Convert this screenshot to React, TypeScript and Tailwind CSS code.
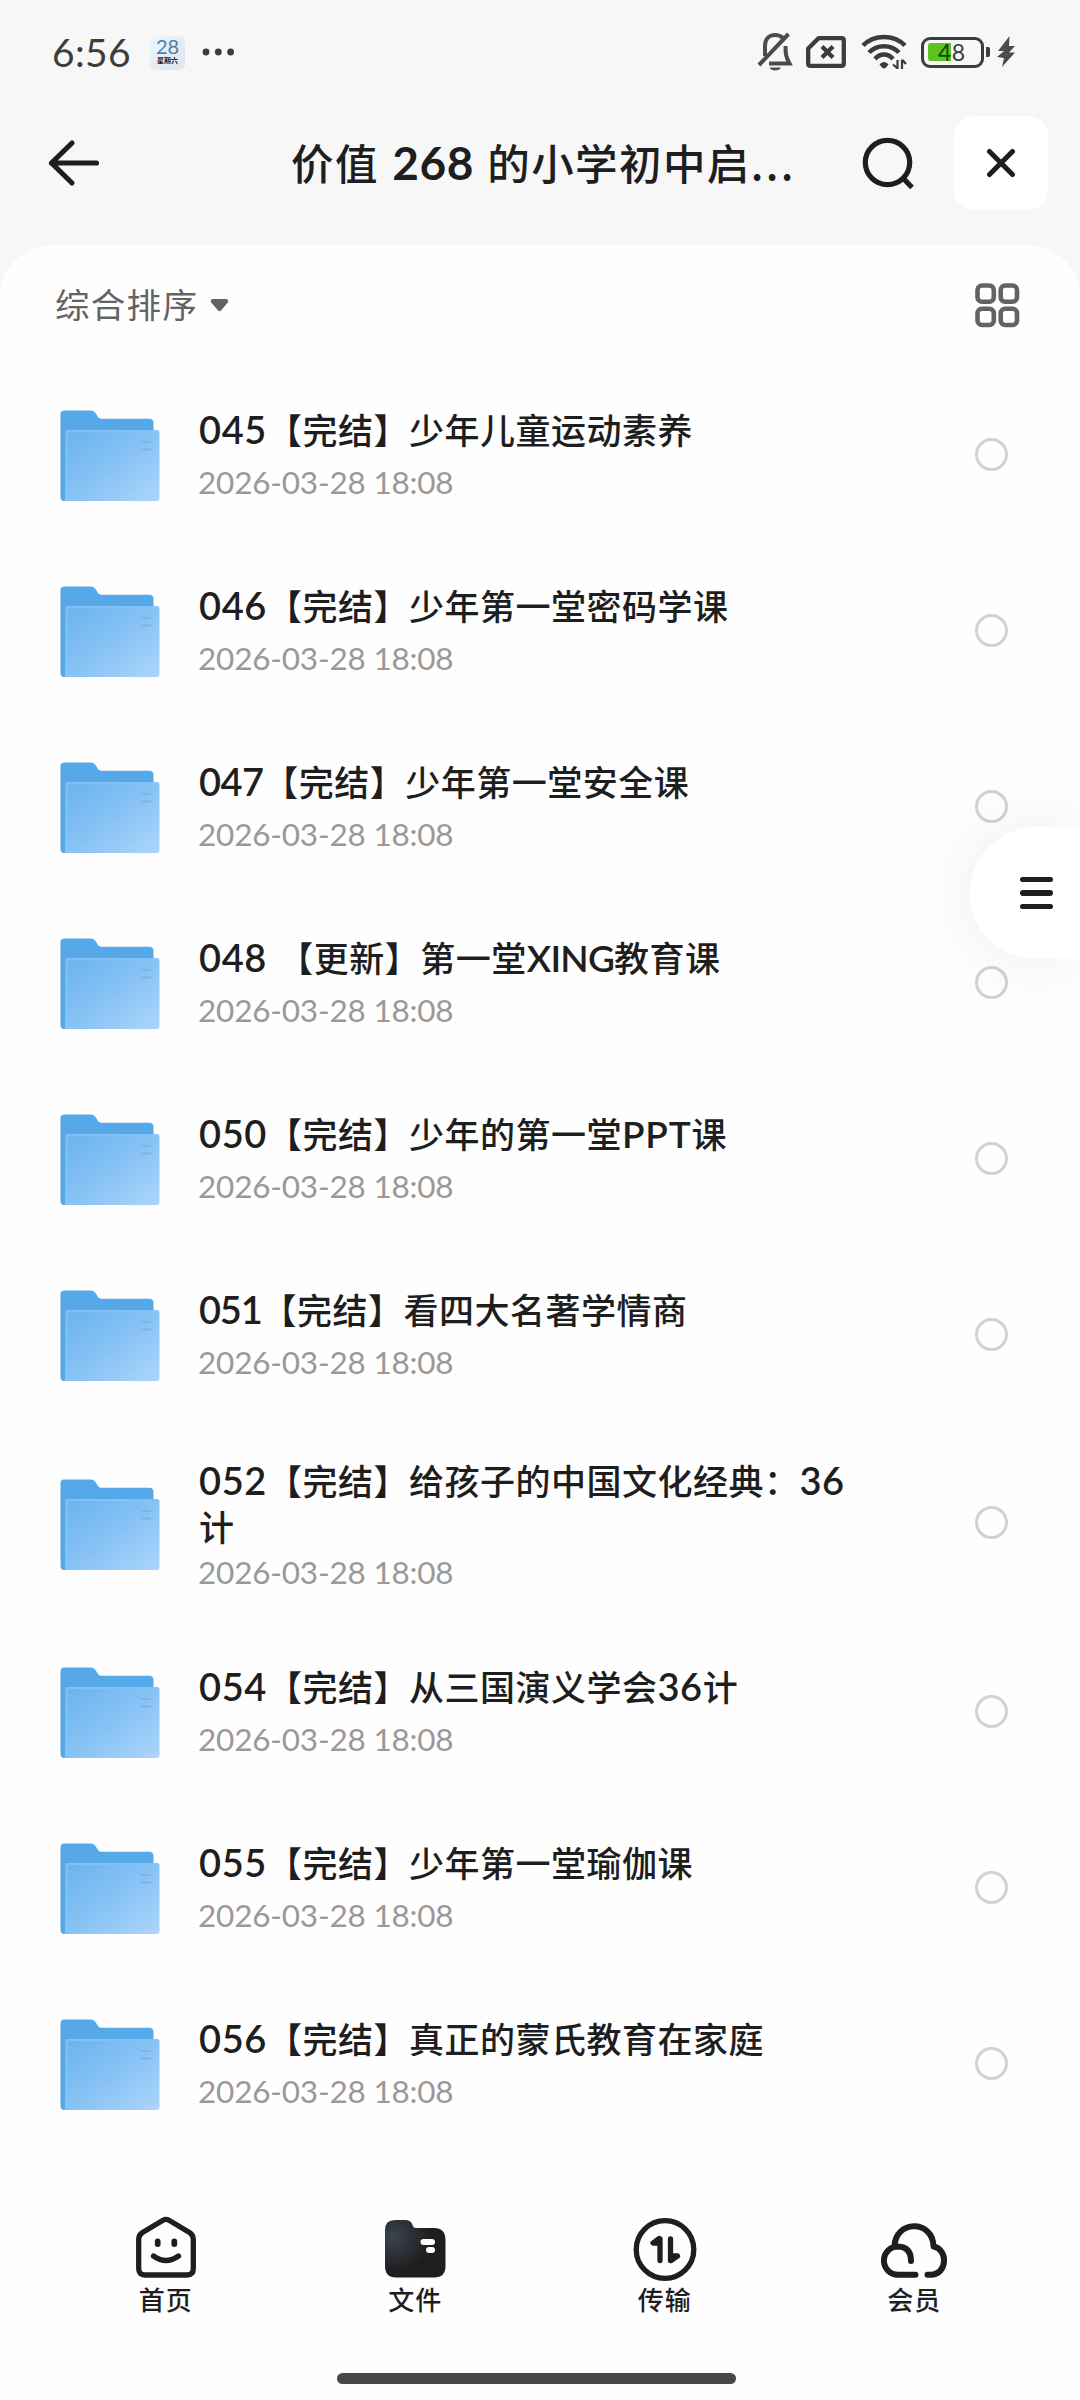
import React from "react";

const LATIN = /([A-Za-z]+|[0-9]+)/;

function Mixed({ text, digits, letters }: { text: string; digits: string; letters: string }) {
  return (
    <>
      {text.split(LATIN).map((part, i) =>
        i % 2 === 1 ? (
          <span key={i} className={/[0-9]/.test(part) ? digits : letters}>
            {part}
          </span>
        ) : (
          <React.Fragment key={i}>{part}</React.Fragment>
        ),
      )}
    </>
  );
}

const DIGITS = "font-[Lato] text-[38px] font-semibold leading-none tracking-[0.600px]";
const DIGITS_SNUG = "font-[Lato] text-[38px] font-semibold leading-none tracking-[-0.600px]";
const DIGITS_TIGHT = "font-[Lato] text-[38px] font-semibold leading-none tracking-[-1.200px]";
const LETTERS = "font-[Lato] text-[37px] font-semibold leading-none tracking-[-0.800px]";
const LETTERS_WIDE = "font-[Lato] text-[37px] font-semibold leading-none tracking-[0.800px]";

type Row = { lines: string[]; digits?: string; letters?: string };

const rows: Row[] = [
  { lines: ["045【完结】少年儿童运动素养"] },
  { lines: ["046【完结】少年第一堂密码学课"] },
  { lines: ["047【完结】少年第一堂安全课"], digits: DIGITS_SNUG },
  { lines: ["048 【更新】第一堂XING教育课"] },
  { lines: ["050【完结】少年的第一堂PPT课"], letters: LETTERS_WIDE },
  { lines: ["051【完结】看四大名著学情商"], digits: DIGITS_TIGHT },
  { lines: ["052【完结】给孩子的中国文化经典：36", "计"] },
  { lines: ["054【完结】从三国演义学会36计"] },
  { lines: ["055【完结】少年第一堂瑜伽课"] },
  { lines: ["056【完结】真正的蒙氏教育在家庭"] },
];

function StatusBar() {
  return (
    <div className="flex h-[104px] items-center pl-[52px] pr-[64px]">
      <span className="w-[98px] font-[Lato] text-[39px] leading-none tracking-[0.3px] text-[#3c3c3c]">6:56</span>
      <div className="mt-[2px] flex h-[34px] w-[35px] flex-col items-center rounded-[6px] bg-linear-to-br from-[#eaf6fd] to-[#dfe4ec]">
        <span className="mt-[1px] font-[Lato] text-[20px] leading-[19px] text-[#4a7fae]">28</span>
        <span className="font-['Noto_Sans_CJK_SC'] text-[7px] font-bold leading-[8px] text-[#222]">星期六</span>
      </div>
      <svg className="ml-[17px]" width="34" height="10" viewBox="0 0 34 10" fill="#3c3c3c">
        <circle cx="4" cy="5" r="3.4" />
        <circle cx="16.3" cy="5" r="3.4" />
        <circle cx="28.6" cy="5" r="3.4" />
      </svg>
      <div className="ml-auto flex items-center">
        <svg width="36" height="40" viewBox="0 0 36 40" fill="none" stroke="#4c4c4c" strokeWidth="4">
          <path d="M8 24V14C8 7 12 3 18 3C21.500 3 24 4 26 6" />
          <path d="M28.500 14C28.500 22 29 25 32.500 31.500H12" />
          <path d="M2 33L31.500 2" />
          <path d="M12.500 35.500H24C22.500 39.500 14 39.500 12.500 35.500Z" fill="#4c4c4c" stroke="none" />
        </svg>
        <svg className="ml-[13px]" width="40" height="32" viewBox="0 0 40 32" fill="none" stroke="#3c3c3c" strokeWidth="4.300">
          <path d="M12.500 2.200H35.500Q37.800 2.200 37.800 4.500V27.500Q37.800 29.800 35.500 29.800H4.500Q2.200 29.800 2.200 27.500V12.500Z" strokeLinejoin="round" />
          <path d="M16 10.500L27 21.500M27 10.500L16 21.500" />
        </svg>
        <svg className="ml-[15px]" width="46" height="36" viewBox="0 0 46 36" fill="none" stroke="#3c3c3c" strokeWidth="4.500">
          <path d="M2 11.500C13 0 33 0 44 11.500" />
          <path d="M8 18.500C16 10 30 10 38 18.500" />
          <path d="M14 25C19 19 27 19 32 25" />
          <path d="M18.500 30.500C21 27 25 27 27.500 30.500L25 33.500Q23 35.500 21 33.500Z" fill="#3c3c3c" stroke="none" />
          <path d="M32 30.500L36 34H36.500V26M45 30L42 26.500H41V35" strokeWidth="2.200" />
        </svg>
        <div className="relative ml-[14px] flex h-[31px] w-[63px] items-center rounded-[9px] border-[3.500px] border-[#3c3c3c] pl-[14px]">
          <div className="absolute left-[4px] top-[3px] h-[18px] w-[23px] rounded-l-[3px] bg-[#5cc41e]" />
          <span className="relative font-[Lato] text-[23px] leading-none tracking-[0.500px] text-[#3c3c3c]">
            <span className="text-[#0c4a0c]">4</span>8
          </span>
        </div>
        <div className="ml-[2px] h-[10px] w-[4px] rounded-r-[2px] bg-[#3c3c3c]" />
        <svg className="ml-[7px]" width="19" height="32" viewBox="0 0 19 32" fill="#4c4c4c">
          <path d="M12.500 0L1 15H7L0 21L7 22L5 31L18 16.500H12L18 10H12Z" />
        </svg>
      </div>
    </div>
  );
}

function Header() {
  return (
    <div className="flex h-[141px] items-start pl-[47px] pr-[32px] pt-[12px]">
      <div className="flex h-[94px] w-full items-center">
        <svg width="54" height="48" viewBox="0 0 54 48" fill="none" stroke="#1e1e1e" strokeWidth="5.200" strokeLinecap="round" strokeLinejoin="round">
          <path d="M25 4L4.500 24L25 44M4.500 24H49.500" />
        </svg>
        <h1 className="ml-[190px] w-[520px] whitespace-nowrap text-[42.500px] font-medium leading-none tracking-[1.400px] text-[#1e1e1e] [word-spacing:2.500px]">
          <Mixed
            text="价值 268 的小学初中启"
            digits="font-[Lato] text-[46px] font-bold tracking-[0.5px] leading-none"
            letters="font-[Lato]"
          />
          <span className="tracking-[2.400px]">...</span>
        </h1>
        <svg className="ml-[50px]" width="56" height="56" viewBox="0 0 56 56" fill="none" stroke="#1e1e1e" strokeWidth="5.200">
          <circle cx="26.500" cy="27.500" r="22.200" />
          <path d="M42 43L51 52.500" />
        </svg>
        <div className="ml-auto flex h-[94px] w-[94px] items-center justify-center rounded-[20px] bg-white">
          <svg width="30" height="30" viewBox="0 0 30 30" stroke="#1e1e1e" strokeWidth="5" strokeLinecap="round">
            <path d="M3.500 3.500L26.500 26.500M26.500 3.500L3.500 26.500" />
          </svg>
        </div>
      </div>
    </div>
  );
}

function FolderIcon() {
  return (
    <svg className="mt-[4px] shrink-0" width="100" height="92" viewBox="0 0 100 92">
      <defs>
        <linearGradient id="front" x1="0" y1="0" x2="1" y2="1">
          <stop offset="0" stopColor="#6bb3ee" />
          <stop offset="0.45" stopColor="#83c0f4" />
          <stop offset="1" stopColor="#acd5fb" />
        </linearGradient>
      </defs>
      <path d="M0.500 4Q0.500 0.500 4 0.500H31Q34 0.500 35.500 3L38 7Q39 8.700 41 8.700H89Q93.500 8.700 93.500 13V80L6 91H4Q0.500 91 0.500 87Z" fill="#55a9e9" />
      <path d="M5 20H97Q99.500 20 99.500 23V88Q99.500 91 97 91H5Z" fill="url(#front)" />
      <path d="M7 91V21H98" fill="none" stroke="#86c4f6" strokeWidth="1.500" />
      <path d="M81 32H91M81 39.500H91" stroke="#78b5e8" strokeWidth="2" />
    </svg>
  );
}

function FileRow({ lines, digits = DIGITS, letters = LETTERS }: Row) {
  const tall = lines.length > 1;
  return (
    <li className={tall ? "flex h-[201px] items-center pl-[60px] pr-[72px]" : "flex h-[176px] items-center pl-[60px] pr-[72px]"}>
      <FolderIcon />
      <div className={tall ? "ml-[39px] flex flex-1 flex-col gap-[3px] pt-1" : "ml-[39px] flex flex-1 flex-col gap-[10px]"}>
        <div className="whitespace-nowrap text-[35px] font-medium leading-[46px] tracking-[0.500px] text-[#1e1e1e] [word-spacing:3px]">
          {lines.map((line) => (
            <div key={line} className="h-[46px]">
              <Mixed text={line} digits={digits} letters={letters} />
            </div>
          ))}
        </div>
        <div className="-ml-px h-10 font-[Lato] text-[31.500px] leading-[41px] tracking-[-0.200px] text-[#999]">2026-03-28 18:08</div>
      </div>
      <div className="h-[33px] w-[33px] rounded-full border-[3px] border-[#d2d2d2]" />
    </li>
  );
}

const tabStroke = {
  fill: "none",
  stroke: "#1e1e1e",
  strokeWidth: 5.3,
  strokeLinecap: "round",
  strokeLinejoin: "round",
} as const;

function HomeIcon() {
  return (
    <svg width="70" height="66" viewBox="0 0 70 66" {...tabStroke}>
      <path d="M32 5.200Q35 3.500 38 5.200L58.500 17.500Q62.300 20 62.300 24V53.500Q62.300 60 56 60H14Q7.700 60 7.700 53.500V24Q7.700 20 11.500 17.500Z" />
      <path d="M26.700 26.500V29M43.300 26.500V29" strokeWidth="5.800" />
      <path d="M22.500 41Q35 50 47.500 41" />
    </svg>
  );
}

function FilesIcon() {
  return (
    <svg width="70" height="66" viewBox="0 0 70 66">
      <defs>
        <radialGradient id="glow" cx="0.150" cy="0.300" r="0.600">
          <stop offset="0" stopColor="#3a4450" />
          <stop offset="1" stopColor="#1e1e1e" />
        </radialGradient>
      </defs>
      <path d="M5 15Q5 5 15 5H25Q31 5 32.500 10Q33.300 13 36 13H54Q65.500 13 65.500 25V51Q65.500 62.500 54 62.500H16Q5 62.500 5 51Z" fill="url(#glow)" />
      <rect x="40.500" y="24" width="14.500" height="6" rx="3" fill="#fff" />
      <rect x="46" y="32" width="9" height="6" rx="3" fill="#fff" />
    </svg>
  );
}

function TransferIcon() {
  return (
    <svg width="70" height="66" viewBox="0 0 70 66" {...tabStroke}>
      <circle cx="35" cy="34.500" r="28.800" />
      <path d="M30 24V45.500M29 23.500L23 28H30" />
      <path d="M40.500 24V45.500M41 45.500L47.500 41H40.500" />
    </svg>
  );
}

function VipIcon() {
  return (
    <svg width="70" height="66" viewBox="0 0 70 66" {...tabStroke} strokeWidth={6}>
      <path d="M36.500 59.700H19A14 14 0 0 1 19 31.500Q32 32 32 46M15.500 32C15.500 5 54 4 54.500 31.500C69 34 69 59.700 51.500 59.700H48.500" />
    </svg>
  );
}

const tabs = [
  { label: "首页", icon: <HomeIcon /> },
  { label: "文件", icon: <FilesIcon /> },
  { label: "传输", icon: <TransferIcon /> },
  { label: "会员", icon: <VipIcon /> },
];

export default function App() {
  return (
    <div className="relative flex h-[2400px] w-[1080px] flex-col overflow-hidden bg-[#f7f7f7] font-['Noto_Sans_CJK_SC',sans-serif]">
      <StatusBar />
      <Header />
      <main className="flex flex-1 flex-col rounded-t-[52px] bg-[#fefefe]">
        <div className="flex h-[121px] items-start justify-between pl-[55px] pr-[60px] pt-[38px]">
          <div className="-mt-[2px] flex items-center gap-[12px]">
            <span className="text-[34.500px] leading-[44px] tracking-[1.300px] text-[#636363]">综合排序</span>
            <svg className="mt-[4px]" width="19" height="13" viewBox="0 0 19 13" fill="#636363">
              <path d="M2.500 0H16.500Q19 1 17.800 3.500L11 11.500Q9.500 13 8 11.500L1.200 3.500Q0 1 2.500 0Z" />
            </svg>
          </div>
          <svg width="45" height="45" viewBox="0 0 45 45" fill="none" stroke="#636363" strokeWidth="4.600">
            <rect x="2.500" y="2.500" width="16.300" height="16.300" rx="4.500" />
            <rect x="25.700" y="2.500" width="16.300" height="16.300" rx="4.500" />
            <rect x="2.500" y="25.700" width="16.300" height="16.300" rx="4.500" />
            <rect x="25.700" y="25.700" width="16.300" height="16.300" rx="4.500" />
          </svg>
        </div>
        <ul>
          {rows.map((r) => (
            <FileRow key={r.lines[0]} {...r} />
          ))}
        </ul>
        <nav className="mt-auto flex h-[185px] flex-col">
          <div className="grid grid-cols-4 px-[41px]">
            {tabs.map((t) => (
              <div key={t.label} className="flex flex-col items-center">
                {t.icon}
                <span className="mt-[3px] text-[26px] font-medium leading-[30px] tracking-[1px] text-[#1e1e1e]">{t.label}</span>
              </div>
            ))}
          </div>
          <div className="mb-[16px] ml-[337px] mt-auto h-[11px] w-[399px] rounded-full bg-[#474747]" />
        </nav>
      </main>
      <button className="absolute right-0 top-[827px] flex h-[132px] w-[110px] flex-col items-start justify-center gap-[8px] rounded-l-full bg-white pl-[50px] shadow-[0_0_80px_rgba(0,0,0,0.07)]">
        <span className="h-[5.500px] w-[33px] rounded-full bg-[#1e1e1e]" />
        <span className="h-[5.500px] w-[33px] rounded-full bg-[#1e1e1e]" />
        <span className="h-[5.500px] w-[33px] rounded-full bg-[#1e1e1e]" />
      </button>
    </div>
  );
}
